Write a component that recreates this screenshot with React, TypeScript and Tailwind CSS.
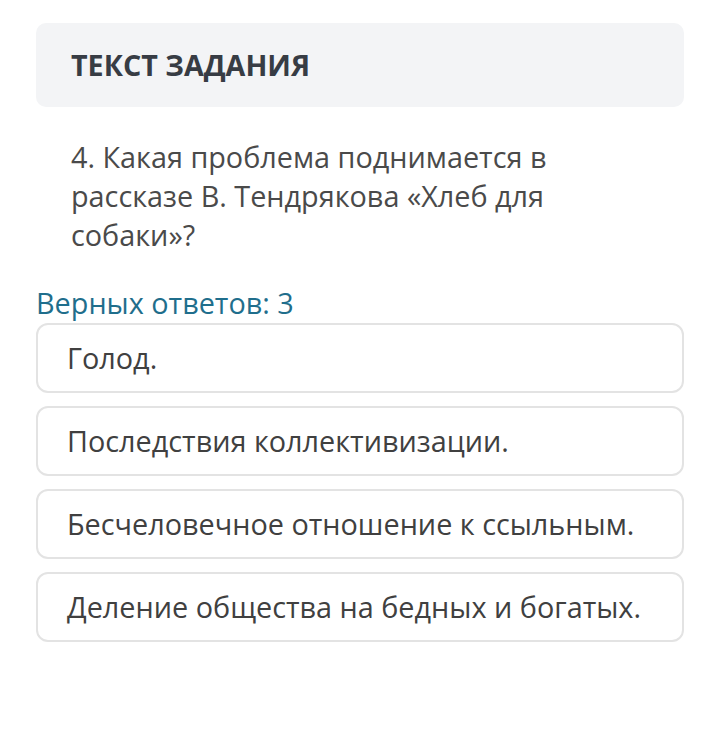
import React from "react";

const answers = [
  "Голод.",
  "Последствия коллективизации.",
  "Бесчеловечное отношение к ссыльным.",
  "Деление общества на бедных и богатых.",
];

export default function App() {
  return (
    <div
      className="w-[720px] h-[734px] bg-white px-9 pt-[23px]"
      style={{ fontFamily: '"Open Sans", "Noto Sans", sans-serif' }}
    >
      <div className="h-[84px] rounded-[10px] bg-[#f3f4f6] flex items-center px-[35px]">
        <span className="text-[28.7px] font-bold text-[#373c44] leading-none">ТЕКСТ ЗАДАНИЯ</span>
      </div>
      <div className="mt-[30px] pl-[35px] pr-[110px] text-[28.8px] leading-[39px] text-[#4a4a4a]">
        4. Какая проблема поднимается в рассказе В. Тендрякова «Хлеб для собаки»?
      </div>
      <div className="mt-[29px] text-[28.8px] leading-[39px] text-[#1f6e8c]">Верных ответов: 3</div>
      <div className="mt-px flex flex-col gap-[13px]">
        {answers.map((a) => (
          <div
            key={a}
            className="h-[70px] rounded-[12px] border-2 border-[#e3e3e3] flex items-center pl-[29px] text-[28.8px] text-[#404040]"
          >
            {a}
          </div>
        ))}
      </div>
    </div>
  );
}
